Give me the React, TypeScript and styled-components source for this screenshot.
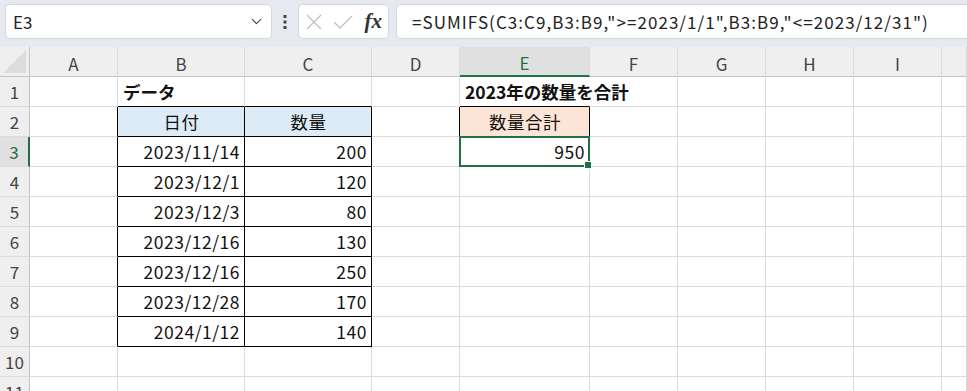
import styled, { createGlobalStyle } from "styled-components";
import { ChevronDown } from "lucide-react";

const GlobalStyle = createGlobalStyle`
  body {
    margin: 0;
    overflow: hidden;
    background: #ffffff;
    font-family: "Noto Sans CJK JP", "Noto Sans", sans-serif;
  }
`;

const GREEN = "#1e7145";
const GRID = "#dadada";
const HEAD_LINE = "#c4c4c4";

//toolbar
const Toolbar = styled.div`
  height: 47px;
  background-color: #e6e9ef;
  padding: 4px 0 0 5px;
  box-sizing: border-box;
  overflow: hidden;

  display: flex;
  align-items: flex-start;

  & > * {
    flex-shrink: 0;
  }
`;
const NameBox = styled.div`
  width: 267px;
  height: 35px;
  box-sizing: border-box;
  background: #fff;
  border: 1px solid #d5d8de;
  border-radius: 5px;
  padding: 0 6px 0 7px;

  display: flex;
  align-items: center;
  justify-content: space-between;

  font-size: 17px;
  color: #222;
`;
const Grip = styled.div`
  width: 26px;
  height: 35px;

  display: flex;
  justify-content: center;
  align-items: center;
`;
const FxBox = styled.div`
  width: 91px;
  height: 35px;
  box-sizing: border-box;
  background: #fff;
  border: 1px solid #d5d8de;
  border-radius: 5px;
  padding: 0 6px 0 6px;

  display: flex;
  align-items: center;
  gap: 10px;
`;
const Fx = styled.span`
  margin-left: auto;
  font-family: "Liberation Serif", serif;
  font-style: italic;
  font-weight: 700;
  font-size: 21px;
  color: #333;
  line-height: 1;
`;
const FormulaBox = styled.div`
  width: 620px;
  height: 35px;
  margin-left: 7px;
  box-sizing: border-box;
  background: #fff;
  border: 1px solid #d5d8de;
  border-radius: 5px;
  padding-left: 15px;

  display: flex;
  align-items: center;

  font-size: 17px;
  letter-spacing: 1.05px;
  color: #222;
  white-space: nowrap;
`;

//sheet
const Sheet = styled.div`
  display: grid;
  grid-template-columns: 30px 88px 127px 127px 88px 130px 88px 88px 88px 88px 1fr;
  grid-auto-rows: 30px;
  background: #fff;
`;
const Corner = styled.div`
  background: #efefef;
  border-right: 1px solid ${HEAD_LINE};
  border-bottom: 1px solid ${HEAD_LINE};
  box-sizing: border-box;
  display: flex;
  align-items: flex-end;
  justify-content: flex-end;
  padding: 0 3px 3px 0;
`;
const ColHead = styled.div<{ $active?: boolean }>`
  box-sizing: border-box;
  background: ${(p) => (p.$active ? "#e0e0e0" : "#efefef")};
  border-right: 1px solid ${GRID};
  border-bottom: ${(p) => (p.$active ? `2px solid ${GREEN}` : `1px solid ${HEAD_LINE}`)};
  color: ${(p) => (p.$active ? GREEN : "#444")};

  display: flex;
  justify-content: center;
  align-items: center;
  padding-top: 3px;
  font-size: 17px;
`;
const RowHead = styled.div<{ $active?: boolean }>`
  box-sizing: border-box;
  background: ${(p) => (p.$active ? "#e0e0e0" : "#efefef")};
  border-right: ${(p) => (p.$active ? `2px solid ${GREEN}` : `1px solid ${HEAD_LINE}`)};
  border-bottom: 1px solid ${GRID};
  color: ${(p) => (p.$active ? GREEN : "#444")};

  display: flex;
  justify-content: center;
  align-items: center;
  font-size: 17px;
`;
const Cell = styled.div<{
  $align?: "left" | "center" | "right";
  $bold?: boolean;
  $bg?: string;
  $right?: string;
  $bottom?: string;
  $selected?: boolean;
}>`
  position: ${(p) => (p.$selected ? "relative" : "static")};
  box-sizing: border-box;
  background: ${(p) => p.$bg || "transparent"};
  border-right: 1px solid ${(p) => p.$right || GRID};
  border-bottom: 1px solid ${(p) => p.$bottom || GRID};
  padding: 0 4px 0 5px;

  display: flex;
  align-items: center;
  justify-content: ${(p) =>
    p.$align === "right" ? "flex-end" : p.$align === "center" ? "center" : "flex-start"};

  font-size: 17.5px;
  font-weight: ${(p) => (p.$bold ? 700 : 400)};
  color: #111;
  white-space: nowrap;
  letter-spacing: ${(p) => (p.$bold ? "0" : "0.5px")};
`;
const Selection = styled.div`
  position: absolute;
  left: -1px;
  top: -1px;
  right: -1px;
  bottom: -1px;
  border: 2px solid ${GREEN};
  pointer-events: none;
`;
const Handle = styled.div`
  position: absolute;
  right: -4px;
  bottom: -4px;
  width: 6px;
  height: 6px;
  background: ${GREEN};
  border: 1px solid #fff;
`;

const COLS = ["A", "B", "C", "D", "E", "F", "G", "H", "I", "J"];

type CellData = { text: string; align?: "left" | "center" | "right"; bold?: boolean; bg?: string };

const cells: Record<string, CellData> = {
  B1: { text: "データ", bold: true },
  E1: { text: "2023年の数量を合計", bold: true },
  B2: { text: "日付", align: "center", bg: "#ddebf7" },
  C2: { text: "数量", align: "center", bg: "#ddebf7" },
  E2: { text: "数量合計", align: "center", bg: "#fce4d6" },
  E3: { text: "950", align: "right" },
};

const rows: [string, number][] = [
  ["2023/11/14", 200],
  ["2023/12/1", 120],
  ["2023/12/3", 80],
  ["2023/12/16", 130],
  ["2023/12/16", 250],
  ["2023/12/28", 170],
  ["2024/1/12", 140],
];
rows.forEach(([d, q], i) => {
  cells[`B${i + 3}`] = { text: d, align: "right" };
  cells[`C${i + 3}`] = { text: String(q), align: "right" };
});

function inTable(col: string, row: number) {
  return (col === "B" || col === "C") && row >= 2 && row <= 9;
}

function borders(col: string, row: number) {
  let right: string | undefined;
  let bottom: string | undefined;
  if (inTable(col, row)) {
    right = "#000";
    bottom = "#000";
  }
  if (col === "A" && row >= 2 && row <= 9) right = "#000";
  if ((col === "B" || col === "C") && row === 1) bottom = "#000";
  if (col === "E" && row === 1) {
    bottom = "#000";
    right = "transparent";
  }
  if (col === "D" && row === 2) right = "#000";
  if (col === "E" && row === 2) {
    right = "#000";
    bottom = "#000";
  }
  return { right, bottom };
}

function App() {
  return (
    <>
      <GlobalStyle />
      <Toolbar>
        <NameBox>
          <span>E3</span>
          <ChevronDown size={17} strokeWidth={1.5} color="#444" />
        </NameBox>
        <Grip>
          <svg width="4" height="16" viewBox="0 0 4 16">
            <rect x="0.5" y="1" width="3" height="3" fill="#444" />
            <rect x="0.5" y="6.5" width="3" height="3" fill="#444" />
            <rect x="0.5" y="12" width="3" height="3" fill="#444" />
          </svg>
        </Grip>
        <FxBox>
          <svg width="18" height="18" viewBox="0 0 18 18">
            <path d="M2 2 L16 16 M16 2 L2 16" stroke="#c2c2c2" strokeWidth="1.4" fill="none" />
          </svg>
          <svg width="20" height="16" viewBox="0 0 20 16">
            <path d="M1 8 L7 14 L19 2" stroke="#c2c2c2" strokeWidth="1.4" fill="none" />
          </svg>
          <Fx>fx</Fx>
        </FxBox>
        <FormulaBox>=SUMIFS(C3:C9,B3:B9,"&gt;=2023/1/1",B3:B9,"&lt;=2023/12/31")</FormulaBox>
      </Toolbar>
      <Sheet>
        <Corner>
          <svg width="23" height="23" viewBox="0 0 23 23">
            <polygon points="23,0 23,23 0,23" fill="#dcdcdc" />
          </svg>
        </Corner>
        {COLS.map((c) => (
          <ColHead key={c} $active={c === "E"}>
            {c === "J" ? "" : c}
          </ColHead>
        ))}
        {Array.from({ length: 11 }, (_, i) => i + 1).map((r) => (
          <>
            <RowHead key={`h${r}`} $active={r === 3}>
              {r}
            </RowHead>
            {COLS.map((c) => {
              const id = `${c}${r}`;
              const data = cells[id];
              const b = borders(c, r);
              const selected = id === "E3";
              return (
                <Cell
                  key={id}
                  $align={data?.align}
                  $bold={data?.bold}
                  $bg={data?.bg}
                  $right={b.right}
                  $bottom={b.bottom}
                  $selected={selected}
                >
                  {data?.text}
                  {selected && (
                    <Selection>
                      <Handle />
                    </Selection>
                  )}
                </Cell>
              );
            })}
          </>
        ))}
      </Sheet>
    </>
  );
}

export default App;
